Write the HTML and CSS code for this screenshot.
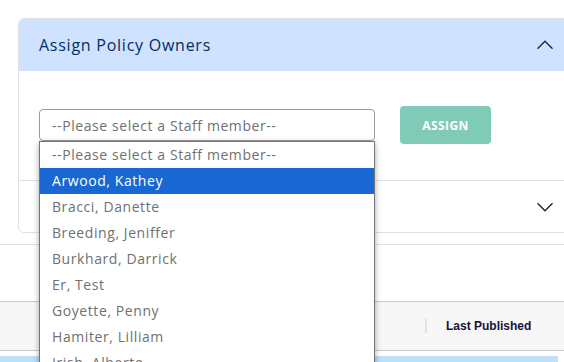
FILE: index.html
```html
<!DOCTYPE html>
<html>
<head>
<meta charset="utf-8">
<link rel="stylesheet" href="styles.css">
</head>
<body>
<div class="page">
  <div class="accordion">
    <div class="acc-item">
      <div class="acc-header open">
        <span class="acc-title">Assign Policy Owners</span>
        <svg class="chev" width="20" height="20" viewBox="0 0 16 16"><path d="M2 11L8 5L14 11" fill="none" stroke="#052c65" stroke-width="1.1"/></svg>
      </div>
      <div class="acc-body">
        <div class="select">--Please select a Staff member--</div>
        <button class="btn-assign">ASSIGN</button>
      </div>
    </div>
    <div class="acc-item second">
      <div class="acc-header">
        <span class="acc-title"></span>
        <svg class="chev" width="20" height="20" viewBox="0 0 16 16"><path d="M2 5L8 11L14 5" fill="none" stroke="#212529" stroke-width="1.1"/></svg>
      </div>
    </div>
  </div>
  <div class="section">
    <div class="table-head">
      <div class="th-spacer"></div>
      <div class="th-sep"></div>
      <div class="th">Last Published</div>
    </div>
    <div class="row-selected"></div>
  </div>
</div>
<ul class="listbox">
  <li>--Please select a Staff member--</li>
  <li class="active">Arwood, Kathey</li>
  <li>Bracci, Danette</li>
  <li>Breeding, Jeniffer</li>
  <li>Burkhard, Darrick</li>
  <li>Er, Test</li>
  <li>Goyette, Penny</li>
  <li>Hamiter, Lilliam</li>
  <li>Irish, Alberto</li>
  <li>Jones, Mary</li>
</ul>
</body>
</html>
```
FILE: styles.css
```css
html, body {
  margin: 0;
  padding: 0;
  background: #fff;
  overflow: hidden;
  width: 564px;
  height: 362px;
}
body {
  position: relative;
  font-family: "Open Sans", "Liberation Sans", sans-serif;
}
.page {
  padding-top: 18px;
}
.accordion {
  margin-left: 18px;
  width: 556px;
  box-sizing: border-box;
  border: 1px solid #dee2e6;
  border-radius: 6px;
  overflow: hidden;
}
.acc-header {
  display: flex;
  align-items: center;
  justify-content: space-between;
  height: 52px;
  box-sizing: border-box;
  padding: 0 18px 0 20px;
}
.acc-header.open {
  background: #cfe2ff;
  color: #052c65;
}
.acc-title {
  font-size: 16px;
  letter-spacing: 0.75px;
  color: #052c65;
}
.chev {
  display: block;
}
.acc-body {
  display: flex;
  align-items: center;
  gap: 25px;
  padding: 35px 20px 36px 20px;
}
.select {
  width: 336px;
  height: 32px;
  box-sizing: border-box;
  border: 1px solid #9a9a9a;
  border-radius: 4px;
  padding-left: 12px;
  font-size: 14px;
  letter-spacing: 0.58px;
  color: #707070;
  display: flex;
  align-items: center;
}
.btn-assign {
  width: 91px;
  height: 38px;
  border: none;
  border-radius: 4px;
  background: #80cbb7;
  color: #fff;
  font-family: "Open Sans", "Liberation Sans", sans-serif;
  font-weight: 700;
  font-size: 12px;
  letter-spacing: 0.4px;
  padding: 0;
}
.second {
  border-top: 1px solid #dee2e6;
}
.second .acc-header {
  height: 51px;
}
.section {
  margin-top: 11px;
  border-top: 1px solid #dee2e6;
  padding-top: 56px;
}
.table-head {
  display: flex;
  align-items: center;
  height: 48px;
  background: #f7f7f7;
  border-top: 1px solid #c8c8cc;
  border-bottom: 1px solid #c8c8cc;
}
.th-spacer {
  width: 425px;
  flex: none;
}
.th-sep {
  width: 2px;
  height: 14px;
  background: #dde2ec;
}
.th {
  padding-left: 19px;
  font-family: "Liberation Sans", Arial, sans-serif;
  font-weight: 700;
  font-size: 12px;
  color: #14143a;
}
.row-selected {
  margin-top: 5px;
  width: 558px;
  height: 30px;
  background: #bee0f8;
}
.listbox {
  position: absolute;
  left: 39px;
  top: 141px;
  width: 336px;
  box-sizing: border-box;
  margin: 0;
  padding: 0;
  list-style: none;
  background: #fff;
  border: 1px solid #767676;
  box-shadow: 0 2px 6px rgba(0, 0, 0, 0.35);
}
.listbox li {
  height: 26px;
  line-height: 26px;
  padding-left: 12px;
  font-size: 14px;
  letter-spacing: 0.58px;
  color: #707070;
  white-space: nowrap;
}
.listbox li.active {
  background: #1967d2;
  color: #fff;
}
```
